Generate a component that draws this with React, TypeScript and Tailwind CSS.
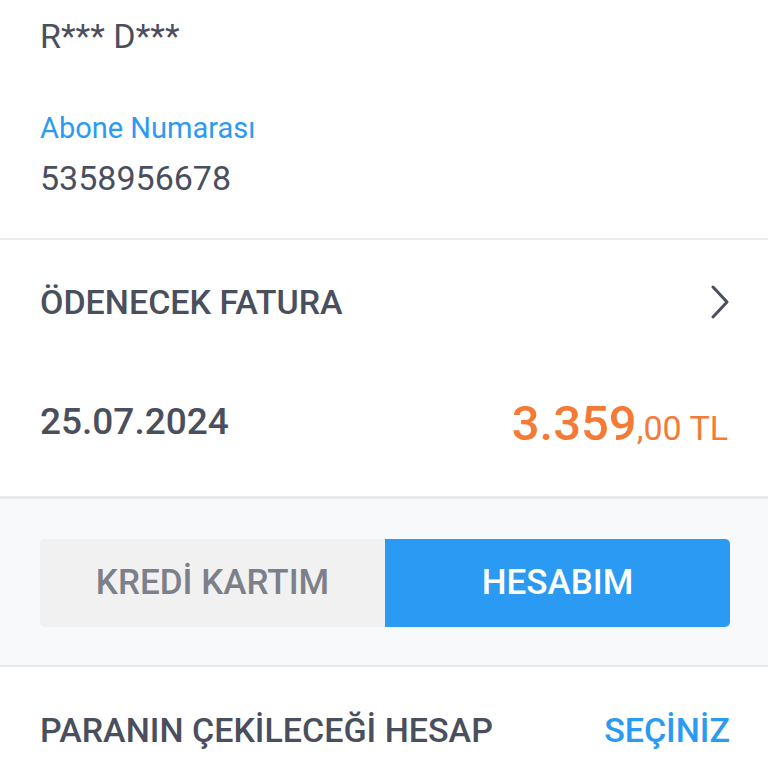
import React from 'react';

export default function App() {
  return (
    <div className="w-[768px] h-[768px] overflow-hidden bg-white text-[#4a4f5e]" style={{ fontFamily: 'Roboto, "Liberation Sans", sans-serif' }}>
      <section className="px-10 pt-[14px] pb-[40px]">
        <div className="text-[34px] leading-[44px]">R*** D***</div>
        <div className="mt-[52px] text-[29px] leading-[36px] text-[#2b9af3]">Abone Numarası</div>
        <div className="mt-[12px] text-[34px] leading-[40px]">5358956678</div>
      </section>

      <div className="h-[2px] bg-[#ececee]" />

      <section className="px-10">
        <div className="flex items-center justify-between h-[124px]">
          <span className="text-[34px] font-medium">ÖDENECEK FATURA</span>
          <svg width="20" height="34" viewBox="0 0 20 34" fill="none" className="mr-[-2px]">
            <path d="M3 2 L17 17 L3 32" stroke="#4a4f5e" strokeWidth="3" strokeLinecap="round" strokeLinejoin="round" />
          </svg>
        </div>
        <div className="flex items-end justify-between h-[132px] pb-[48px]">
          <span className="text-[37px] font-medium leading-none mb-[8px]">25.07.2024</span>
          <span className="text-[#f47a35] leading-none">
            <span className="text-[49px] font-medium">3.359</span>
            <span className="text-[34px]">,00 TL</span>
          </span>
        </div>
      </section>

      <div className="bg-[#f8f9fb] border-t-[3px] border-b-[2px] border-[#e8e8ec] pl-10 pr-[38px] pt-[40px] pb-[38px]">
        <div className="flex h-[88px] rounded-[5px] overflow-hidden">
          <div className="w-[345px] flex items-center justify-center bg-[#f1f1f1] text-[35px] font-medium text-[#7d808a]">KREDİ KARTIM</div>
          <div className="flex-1 flex items-center justify-center bg-[#2b9af3] text-[35px] font-medium text-white">HESABIM</div>
        </div>
      </div>

      <section className="pl-10 pr-[38px] flex items-center justify-between h-[126px]">
        <span className="text-[34px] font-medium">PARANIN ÇEKİLECEĞİ HESAP</span>
        <span className="text-[34px] font-medium text-[#2b9af3]">SEÇİNİZ</span>
      </section>
    </div>
  );
}
